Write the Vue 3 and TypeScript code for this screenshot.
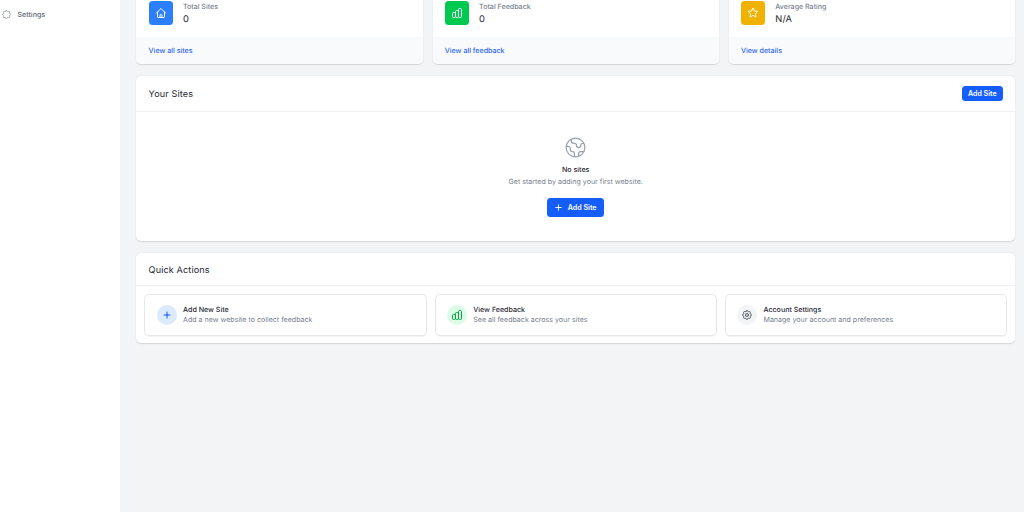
<script setup lang="ts">
const cog = 'M10.325 4.317c.426-1.756 2.924-1.756 3.35 0a1.724 1.724 0 002.573 1.066c1.543-.94 3.31.826 2.37 2.37a1.724 1.724 0 001.065 2.572c1.756.426 1.756 2.924 0 3.35a1.724 1.724 0 00-1.066 2.573c.94 1.543-.826 3.31-2.37 2.37a1.724 1.724 0 00-2.572 1.065c-.426 1.756-2.924 1.756-3.35 0a1.724 1.724 0 00-2.573-1.066c-1.543.94-3.31-.826-2.37-2.37a1.724 1.724 0 00-1.065-2.572c-1.756-.426-1.756-2.924 0-3.35a1.724 1.724 0 001.066-2.573c-.94-1.543.826-3.31 2.37-2.37.996.608 2.296.07 2.572-1.065z'
const cogInner = 'M15 12a3 3 0 11-6 0 3 3 0 016 0z'
const home = 'M3 12l2-2m0 0l7-7 7 7M5 10v10a1 1 0 001 1h3m10-11l2 2m-2-2v10a1 1 0 01-1 1h-3m-6 0a1 1 0 001-1v-4a1 1 0 011-1h2a1 1 0 011 1v4a1 1 0 001 1m-6 0h6'
const chart = 'M9 19v-6a2 2 0 00-2-2H5a2 2 0 00-2 2v6a2 2 0 002 2h2a2 2 0 002-2zm0 0V9a2 2 0 012-2h2a2 2 0 012 2v10m-6 0a2 2 0 002 2h2a2 2 0 002-2m0 0V5a2 2 0 012-2h2a2 2 0 012 2v14a2 2 0 01-2 2h-2a2 2 0 01-2-2z'
const star = 'M11.049 2.927c.3-.921 1.603-.921 1.902 0l1.519 4.674a1 1 0 00.95.69h4.915c.969 0 1.371 1.24.588 1.81l-3.976 2.888a1 1 0 00-.363 1.118l1.518 4.674c.3.922-.755 1.688-1.538 1.118l-3.976-2.888a1 1 0 00-1.176 0l-3.976 2.888c-.783.57-1.838-.197-1.538-1.118l1.518-4.674a1 1 0 00-.363-1.118l-3.976-2.888c-.784-.57-.38-1.81.588-1.81h4.914a1 1 0 00.951-.69l1.519-4.674z'
const globe = 'M3.055 11H5a2 2 0 012 2v1a2 2 0 002 2 2 2 0 012 2v2.945M8 3.935V5.5A2.5 2.5 0 0010.5 8h.5a2 2 0 012 2 2 2 0 104 0 2 2 0 012-2h1.064M15 20.488V18a2 2 0 012-2h3.064M21 12a9 9 0 11-18 0 9 9 0 0118 0z'
const plus = 'M12 6v6m0 0v6m0-6h6m-6 0H6'

interface Stat { label: string; value: string; link: string; tone: string; icon: string }
interface Action { title: string; text: string; tone: string; icon: string }

const stats: Stat[] = [
  { label: 'Total Sites', value: '0', link: 'View all sites', tone: 'blue', icon: home },
  { label: 'Total Feedback', value: '0', link: 'View all feedback', tone: 'green', icon: chart },
  { label: 'Average Rating', value: 'N/A', link: 'View details', tone: 'yellow', icon: star },
]
const actions: Action[] = [
  { title: 'Add New Site', text: 'Add a new website to collect feedback', tone: 'soft-blue', icon: plus },
  { title: 'View Feedback', text: 'See all feedback across your sites', tone: 'soft-green', icon: chart },
  { title: 'Account Settings', text: 'Manage your account and preferences', tone: 'soft-gray', icon: cog + cogInner },
]
</script>

<template>
  <div class="app">
    <aside class="sidebar">
      <a class="nav-item">
        <svg class="nav-icon" viewBox="0 0 24 24"><path :d="cog" /></svg>
        <span>Settings</span>
      </a>
    </aside>
    <main class="main">
      <section class="stats">
        <article v-for="s in stats" :key="s.label" class="card stat">
          <div class="stat-body">
            <div class="tile" :class="s.tone"><svg viewBox="0 0 24 24"><path :d="s.icon" /></svg></div>
            <div>
              <div class="stat-label">{{ s.label }}</div>
              <div class="stat-value">{{ s.value }}</div>
            </div>
          </div>
          <div class="stat-foot"><a>{{ s.link }}</a></div>
        </article>
      </section>

      <section class="card sites">
        <header class="head sites-head">
          <h2>Your Sites</h2>
          <button class="btn small">Add Site</button>
        </header>
        <div class="empty">
          <svg class="globe" viewBox="0 0 24 24"><path :d="globe" /></svg>
          <h3>No sites</h3>
          <p>Get started by adding your first website.</p>
          <button class="btn large">
            <svg viewBox="0 0 24 24"><path :d="plus" /></svg>
            <span>Add Site</span>
          </button>
        </div>
      </section>

      <section class="card quick">
        <header class="head quick-head"><h2>Quick Actions</h2></header>
        <div class="actions">
          <a v-for="a in actions" :key="a.title" class="action">
            <span class="round" :class="a.tone"><svg viewBox="0 0 24 24"><path :d="a.icon" /></svg></span>
            <span class="action-copy">
              <span class="action-title">{{ a.title }}</span>
              <span class="action-text">{{ a.text }}</span>
            </span>
          </a>
        </div>
      </section>
    </main>
  </div>
</template>

<style>
html, body { margin: 0; overflow: hidden; }
</style>

<style scoped>
* { box-sizing: border-box; margin: 0; }
.app {
  display: flex;
  width: 1024px;
  height: 512px;
  overflow: hidden;
  background: #f3f4f6;
  font-family: Inter, "Liberation Sans", sans-serif;
  font-size: 7.08px;
  line-height: 10px;
  text-rendering: geometricPrecision;
  color: #1e2531;
}
svg { display: block; flex: none; fill: none; stroke: currentColor; stroke-width: 2; stroke-linecap: round; stroke-linejoin: round; }
.sidebar { width: 120px; flex: none; background: #fff; padding-top: 9px; }
.nav-item { display: flex; align-items: center; gap: 6px; padding-left: 0.5px; color: #5a6473; font-weight: 500; }
.nav-icon { width: 11px; height: 11px; color: #99a1af; stroke-width: 2; }
.main { flex: 1; padding: 0 9px 0 16.4px; display: flex; flex-direction: column; gap: 12px; }
.card { background: #fff; border-radius: 5px; box-shadow: 0 0.5px 1.5px rgba(0, 0, 0, 0.09), 0 0.5px 1px rgba(0, 0, 0, 0.05); overflow: hidden; }
.stats { display: grid; grid-template-columns: repeat(3, 1fr); gap: 10px; height: 64px; }
.stat { display: flex; flex-direction: column; border-radius: 0 0 5px 5px; }
.stat-body { height: 38px; padding: 1px 12.2px 0; display: flex; gap: 10.3px; }
.tile { width: 24px; height: 24px; border-radius: 3.5px; color: #fff; display: flex; align-items: center; justify-content: center; }
.tile svg { width: 12px; height: 12px; }
.blue { background: #2b7fff; }
.green { background: #00c950; }
.yellow { background: #f0b100; }
.stat-label { color: #79808f; font-weight: 500; padding-top: 0.5px; }
.stat-value { font-size: 9.3px; line-height: 14px; font-weight: 400; letter-spacing: 0.1px; padding-top: 1px; }
.stat-foot { flex: 1; background: #f9fafb; padding: 8.5px 12.2px; color: #2b66f6; font-weight: 500; }
.head { display: flex; align-items: center; justify-content: space-between; padding: 0 12.2px; border-bottom: 1px solid #f0f1f3; }
.head h2 { font-size: 9.1px; font-weight: 400; line-height: 12px; letter-spacing: 0.12px; padding-top: 2px; }
.sites { height: 165px; }
.sites-head { height: 36px; }
.btn { font: inherit; letter-spacing: inherit; border: 0; color: #fff; background: #155dfc; font-weight: 600; border-radius: 3.5px; display: flex; align-items: center; justify-content: center; padding: 0; }
.small { width: 41px; height: 15px; }
.large { width: 57.5px; height: 19px; margin-top: 11px; gap: 3.5px; padding-right: 1.5px; }
.large svg { width: 11px; height: 11px; }
.empty { display: flex; flex-direction: column; align-items: center; padding-top: 23px; }
.globe { width: 25px; height: 25px; color: #99a1af; stroke-width: 1.2; }
.empty h3 { margin-top: 4.5px; font-size: 7.1px; font-weight: 500; }
.empty p { margin-top: 2.5px; color: #79808f; }
.quick { height: 90px; }
.quick-head { height: 33px; padding-top: 1px; }
.actions { display: grid; grid-template-columns: repeat(3, 1fr); gap: 8px; padding: 8px; }
.action { height: 42px; border: 1px solid #e5e7eb; border-radius: 5px; padding: 0 11.5px; display: flex; align-items: center; gap: 6.2px; box-shadow: 0 0.5px 1px rgba(0, 0, 0, 0.05); }
.round { width: 20px; height: 20px; border-radius: 50%; display: flex; align-items: center; justify-content: center; }
.round svg { width: 12px; height: 12px; }
.soft-blue { background: #dbeafe; color: #155dfc; }
.soft-green { background: #dcfce7; color: #00a63e; }
.soft-gray { background: #f3f4f6; color: #4a5565; }
.action-copy { display: flex; flex-direction: column; padding-top: 0.5px; }
.action-title { font-weight: 500; }
.action-text { color: #79808f; }
</style>
